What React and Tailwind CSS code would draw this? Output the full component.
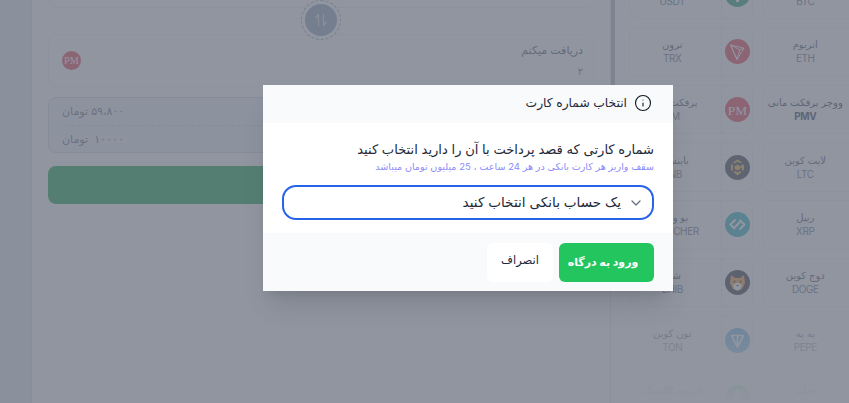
import React from "react";
import { ChevronDown, Info } from "lucide-react";

function Icon({ kind }) {
  if (kind === "tron")
    return (
      <svg viewBox="0 0 25 25" className="w-[25px] h-[25px]">
        <circle cx="12.5" cy="12.5" r="12.5" fill="#ef4056" />
        <path d="M5.5 6 L19 9.2 L12 20.5 Z M5.5 6 L12 20.5 M5.5 6 L14.8 10.8 L19 9.2 M14.8 10.8 L12 20.5" fill="none" stroke="#fff" strokeWidth="0.9" strokeLinejoin="round" />
      </svg>
    );
  if (kind === "pm")
    return (
      <svg viewBox="0 0 25 25" className="w-[25px] h-[25px]">
        <circle cx="12.5" cy="12.5" r="12.5" fill="#ef4056" />
        <text x="12.5" y="17.5" textAnchor="middle" fontSize="13.5" fill="#fff" fontFamily="'Liberation Serif', serif">PM</text>
      </svg>
    );
  if (kind === "pm-small")
    return (
      <svg viewBox="0 0 25 25" className="w-[19px] h-[19px]">
        <circle cx="12.5" cy="12.5" r="12.5" fill="#ef4056" />
        <text x="12.5" y="17.5" textAnchor="middle" fontSize="13.5" fill="#fff" fontFamily="'Liberation Serif', serif">PM</text>
      </svg>
    );
  if (kind === "bnb")
    return (
      <svg viewBox="0 0 25 25" className="w-[25px] h-[25px]">
        <circle cx="12.5" cy="12.5" r="12.5" fill="#3d3f47" />
        <path d="M12.5 4.5 L17 7.2 L15.3 8.2 L12.5 6.6 L9.7 8.2 L8 7.2 Z M17 9 L19 10.2 L19 14.8 L17 16 L17 13.6 L15.3 12.5 Z M8 9 L8 16 L6 14.8 L6 10.2 Z M12.5 9.6 L15.3 11.3 L15.3 14 L12.5 15.6 L9.7 14 L9.7 11.3 Z M8.5 17 L10 16 L12.5 17.6 L15 16 L16.5 17 L12.5 20.5 Z" fill="#e8b53a" />
      </svg>
    );
  if (kind === "voucher")
    return (
      <svg viewBox="0 0 25 25" className="w-[25px] h-[25px]">
        <circle cx="12.5" cy="12.5" r="12.5" fill="#2bb3c0" />
        <path d="M10.5 7.5 L5.5 12.5 L10 17 M14.5 8 L19.5 12.5 L14.5 17.5 M10 15 L15 10" fill="none" stroke="#fff" strokeWidth="2.2" strokeLinejoin="round" />
      </svg>
    );
  if (kind === "shib")
    return (
      <svg viewBox="0 0 25 25" className="w-[25px] h-[25px]">
        <circle cx="12.5" cy="12.5" r="12.5" fill="#33343d" />
        <path d="M6 5 L10 8 L15 8 L19 5 L20 13 L17 19 L12.5 21 L8 19 L5 13 Z" fill="#f59a3c" />
        <path d="M8 15 L12.5 12.5 L17 15 L15.5 19 L12.5 20.5 L9.5 19 Z" fill="#fff" />
        <circle cx="9.5" cy="11.5" r="1" fill="#333" />
        <circle cx="15.5" cy="11.5" r="1" fill="#333" />
        <path d="M11 15 L14 15 L12.5 16.5 Z" fill="#333" />
      </svg>
    );
  if (kind === "ton")
    return (
      <svg viewBox="0 0 25 25" className="w-[25px] h-[25px]">
        <circle cx="12.5" cy="12.5" r="12.5" fill="#3d9fe0" />
        <path d="M6.5 7.5 L18.5 7.5 L12.5 19 Z M12.5 7.5 L12.5 19" fill="none" stroke="#fff" strokeWidth="1.7" strokeLinejoin="round" />
      </svg>
    );
  if (kind === "etc")
    return (
      <svg viewBox="0 0 25 25" className="w-[25px] h-[25px]">
        <circle cx="12.5" cy="12.5" r="12.5" fill="#3ab83a" />
        <path d="M12.5 4 L18 12.5 L12.5 15.5 L7 12.5 Z M7.5 14.5 L12.5 17.5 L17.5 14.5 L12.5 21 Z" fill="#fff" />
      </svg>
    );
  if (kind === "usdt")
    return (
      <svg viewBox="0 0 25 25" className="w-[25px] h-[25px]">
        <circle cx="12.5" cy="12.5" r="12.5" fill="#26a17b" />
        <path d="M7 7 H18 V10 H14 V20 H11 V10 H7 Z" fill="#fff" />
      </svg>
    );
  return <div className="w-[25px] h-[25px] rounded-full bg-gray-300" />;
}

const coins = [
  ["تتر", "USDT", "usdt"],
  ["بیت کوین", "BTC", "none"],
  ["ترون", "TRX", "tron"],
  ["اتریوم", "ETH", "none"],
  ["پرفکت مانی", "PM", "pm"],
  ["ووچر پرفکت مانی", "PMV", "pm", true],
  ["باینسس", "BNB", "bnb"],
  ["لایت کوین", "LTC", "none"],
  ["یو ووچر", "UVOUCHER", "voucher"],
  ["ریپل", "XRP", "none"],
  ["شیبا", "SHIB", "shib"],
  ["دوج کوین", "DOGE", "none"],
  ["تون کوین", "TON", "ton"],
  ["په په", "PEPE", "none"],
  ["اتریوم کلاسیک", "ETC", "etc"],
  ["چیلیز", "CHZ", "none"],
];

function Coin({ name, code, icon, active }) {
  return (
    <div className="flex h-[49.7px] rounded-lg border border-gray-100 bg-white">
      <div className="flex-1 min-w-0 flex flex-col items-center justify-center pr-[6px]">
        <div dir="rtl" className={`whitespace-nowrap text-[10px] leading-[14px] ${active ? "text-gray-700" : "text-gray-600"}`}>{name}</div>
        <div className={`text-[10px] leading-[15px] tracking-[-0.4px] ${active ? "font-bold text-gray-700" : "text-gray-500"}`}>{code}</div>
      </div>
      <div className="w-[31px] shrink-0 flex items-center justify-center border-l border-dashed border-gray-200">
        <Icon kind={icon} />
      </div>
    </div>
  );
}

export default function App() {
  return (
    <div className="relative h-[403px] w-[849px] overflow-hidden bg-white flex font-['Inter','DejaVu_Sans',sans-serif]">
      <div className="w-[32px] shrink-0 bg-[#e6e9f0] border-r border-[#dfe3ea]" />

      <div className="relative w-[578px] shrink-0 px-[16px] -mt-[32px] flex flex-col">
        <div className="h-[40px] shrink-0 rounded-lg border border-gray-100 bg-white" />
        <div className="mt-[26px] h-[53px] shrink-0 rounded-lg border border-gray-100 bg-white flex items-center justify-between pl-[13px] pr-[10px]">
          <Icon kind="pm-small" />
          <div dir="rtl" className="flex flex-col gap-[7px] -mt-[1px]">
            <span className="text-[11px] leading-[14px] text-gray-600">دریافت میکنم</span>
            <span className="text-[10px] leading-[14px] text-gray-500">۲</span>
          </div>
        </div>
        <div className="mt-[10px] h-[56px] shrink-0 rounded-lg border border-gray-300 bg-[#f1f3f9] flex flex-col px-[13px] text-[11px] text-gray-500">
          <div dir="rtl" className="flex-1 flex items-center justify-end border-b border-dashed border-gray-300">۵۹،۸۰۰ تومان</div>
          <div dir="rtl" className="flex-1 flex items-center justify-end">۱۰۰۰۰&nbsp; تومان</div>
        </div>
        <div className="mt-[13px] h-[38px] shrink-0 rounded-lg bg-[#16a34a]" />

        <div className="absolute left-[269px] top-[32px] w-[40px] h-[40px] rounded-full border border-dashed border-gray-400 bg-white flex items-center justify-center">
          <div className="w-[32px] h-[32px] rounded-full bg-[#94a3b8] flex items-center justify-center">
            <svg viewBox="0 0 16 16" className="w-[16px] h-[16px]" fill="none" stroke="#e2e8f0" strokeWidth="1.2">
              <path d="M5.5 14 V2.5 L2.5 6 M10.5 2 V13.5 L13.5 10" />
            </svg>
          </div>
        </div>
      </div>

      <div className="relative w-[5px] shrink-0 border-l border-gray-200">
        <div className="absolute inset-x-0 top-0 h-[200px] bg-[#6b7280]/50" />
      </div>

      <div className="relative flex-1 min-w-0 overflow-hidden pl-[13.5px]">
        <div className="grid grid-cols-[124.5px_124.5px] gap-x-[8.5px] gap-y-[8px] -mt-[30.7px]">
          {coins.map((c) => (
            <Coin key={c[1]} name={c[0]} code={c[1]} icon={c[2]} active={c[3]} />
          ))}
        </div>
        <div className="absolute inset-x-0 bottom-0 h-[110px] bg-gradient-to-t from-white to-transparent" />
      </div>

      <div className="absolute inset-0 bg-[#6b7280]/75" />

      <div className="absolute left-[263px] top-[85px] w-[410px] bg-white shadow-xl flex flex-col">
        <div className="h-[38px] bg-[#f9fafb] flex items-center justify-end pr-[21px] pb-[2px] gap-[7px]">
          <span dir="rtl" className="text-[12.3px] text-gray-800">انتخاب شماره کارت</span>
          <Info size={18} strokeWidth={1.5} className="text-gray-900" />
        </div>
        <div className="h-[110px] px-[19px] flex flex-col">
          <p dir="rtl" className="mt-[17px] text-[13.1px] leading-[18px] text-gray-800">شماره کارتی که قصد پرداخت با آن را دارید انتخاب کنید</p>
          <p dir="rtl" className="mt-[1px] text-[9.6px] leading-[15px] text-[#8b8cf8]">سقف واریز هر کارت بانکی در هر 24 ساعت ، 25 میلیون تومان میباشد</p>
          <div dir="rtl" className="mt-[11px] h-[35px] rounded-[14px] border-2 border-[#2563eb] flex items-center gap-[7px] pr-[8px] text-[13.6px] text-gray-800">
            <ChevronDown size={16} className="text-gray-500" />
            <span>یک حساب بانکی انتخاب کنید</span>
          </div>
        </div>
        <div dir="rtl" className="h-[58px] bg-[#f9fafb] flex items-center gap-[6px] px-[19px]">
          <div className="w-[95px] h-[39px] rounded-md bg-[#22c55e] flex items-center justify-center pr-[7px] text-[11px] font-bold text-white">ورود به درگاه</div>
          <div className="w-[66px] h-[39px] rounded-md bg-white flex items-center justify-center pb-[2px] text-[11.5px] text-gray-800">انصراف</div>
        </div>
      </div>
    </div>
  );
}
